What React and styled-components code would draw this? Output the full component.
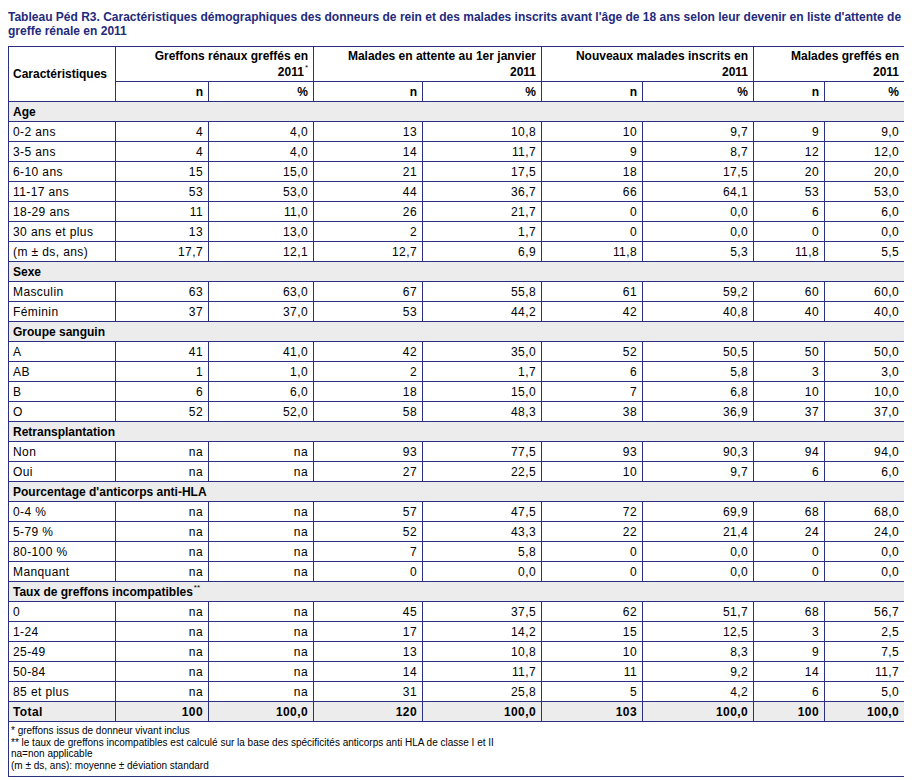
import React from "react";
import styled, { createGlobalStyle } from "styled-components";

const NAVY = "#2b2f80";

const sections = [
  {
    title: "Age",
    rows: [
      ["0-2 ans", "4", "4,0", "13", "10,8", "10", "9,7", "9", "9,0"],
      ["3-5 ans", "4", "4,0", "14", "11,7", "9", "8,7", "12", "12,0"],
      ["6-10 ans", "15", "15,0", "21", "17,5", "18", "17,5", "20", "20,0"],
      ["11-17 ans", "53", "53,0", "44", "36,7", "66", "64,1", "53", "53,0"],
      ["18-29 ans", "11", "11,0", "26", "21,7", "0", "0,0", "6", "6,0"],
      ["30 ans et plus", "13", "13,0", "2", "1,7", "0", "0,0", "0", "0,0"],
      ["(m ± ds, ans)", "17,7", "12,1", "12,7", "6,9", "11,8", "5,3", "11,8", "5,5"],
    ],
  },
  {
    title: "Sexe",
    rows: [
      ["Masculin", "63", "63,0", "67", "55,8", "61", "59,2", "60", "60,0"],
      ["Féminin", "37", "37,0", "53", "44,2", "42", "40,8", "40", "40,0"],
    ],
  },
  {
    title: "Groupe sanguin",
    rows: [
      ["A", "41", "41,0", "42", "35,0", "52", "50,5", "50", "50,0"],
      ["AB", "1", "1,0", "2", "1,7", "6", "5,8", "3", "3,0"],
      ["B", "6", "6,0", "18", "15,0", "7", "6,8", "10", "10,0"],
      ["O", "52", "52,0", "58", "48,3", "38", "36,9", "37", "37,0"],
    ],
  },
  {
    title: "Retransplantation",
    rows: [
      ["Non", "na", "na", "93", "77,5", "93", "90,3", "94", "94,0"],
      ["Oui", "na", "na", "27", "22,5", "10", "9,7", "6", "6,0"],
    ],
  },
  {
    title: "Pourcentage d'anticorps anti-HLA",
    rows: [
      ["0-4 %", "na", "na", "57", "47,5", "72", "69,9", "68", "68,0"],
      ["5-79 %", "na", "na", "52", "43,3", "22", "21,4", "24", "24,0"],
      ["80-100 %", "na", "na", "7", "5,8", "0", "0,0", "0", "0,0"],
      ["Manquant", "na", "na", "0", "0,0", "0", "0,0", "0", "0,0"],
    ],
  },
  {
    title: "Taux de greffons incompatibles",
    sup: "**",
    rows: [
      ["0", "na", "na", "45", "37,5", "62", "51,7", "68", "56,7"],
      ["1-24", "na", "na", "17", "14,2", "15", "12,5", "3", "2,5"],
      ["25-49", "na", "na", "13", "10,8", "10", "8,3", "9", "7,5"],
      ["50-84", "na", "na", "14", "11,7", "11", "9,2", "14", "11,7"],
      ["85 et plus", "na", "na", "31", "25,8", "5", "4,2", "6", "5,0"],
    ],
  },
];

const total = ["Total", "100", "100,0", "120", "100,0", "103", "100,0", "100", "100,0"];

const colWidths = [107, 93, 105, 109, 119, 101, 111, 71, 80];

const GlobalStyle = createGlobalStyle`
  body {
    margin: 8px;
    background: #ffffff;
    font-family: "Liberation Sans", Arial, sans-serif;
    color: #000000;
  }
`;

const Title = styled.div`
  font-size: 12px;
  font-weight: bold;
  line-height: 14px;
  color: #1f2a7c;
  margin: 2px 0 8px 0;
  width: 896px;
`;

const Table = styled.table`
  border-collapse: collapse;
  table-layout: fixed;
  width: 896px;
  border: 1px solid ${NAVY};
  font-size: 12px;
`;

const HeadCell = styled.th`
  border: 1px solid ${NAVY};
  font-weight: bold;
  text-align: ${(p) => p.$align || "right"};
  vertical-align: middle;
  padding: 1px 5px 1px 4px;
  line-height: 16px;
  height: 32px;
`;

const SubHeadCell = styled.th`
  border: 1px solid ${NAVY};
  font-weight: bold;
  text-align: right;
  padding: 0 5px;
  height: 19px;
  line-height: 16px;
`;

const Cell = styled.td`
  border: 1px solid ${NAVY};
  text-align: ${(p) => p.$align || "right"};
  padding: 0 5px 0 4px;
  height: 19px;
  line-height: 16px;
  letter-spacing: 0.4px;
  white-space: nowrap;
  font-weight: ${(p) => (p.$bold ? "bold" : "normal")};
`;

const SectionCell = styled.td`
  border: 1px solid ${NAVY};
  background: #ececec;
  font-weight: bold;
  padding: 0 4px;
  height: 19px;
  line-height: 16px;
`;

const TotalRow = styled.tr`
  background: #ececec;
`;

const NoteCell = styled.td`
  border: 1px solid ${NAVY};
  font-size: 10px;
  line-height: 11.5px;
  padding: 3px 2px 5px 2px;
  vertical-align: top;
`;

const Sup = styled.sup`
  font-size: 8px;
  font-weight: normal;
  vertical-align: top;
  line-height: 8px;
  margin-left: 1px;
`;

const groups = [
  ["Greffons rénaux greffés en", "2011", "*"],
  ["Malades en attente au 1er janvier", "2011"],
  ["Nouveaux malades inscrits en", "2011"],
  ["Malades greffés en", "2011"],
];

export default function App() {
  return (
    <>
      <GlobalStyle />
      <Title>
        Tableau Péd R3. Caractéristiques démographiques des donneurs de rein et des malades
        inscrits avant l'âge de 18 ans selon leur devenir en liste d'attente de greffe rénale en
        2011
      </Title>
      <Table>
        <colgroup>
          {colWidths.map((w, i) => (
            <col key={i} style={{ width: w }} />
          ))}
        </colgroup>
        <thead>
          <tr>
            <HeadCell rowSpan={2} $align="left">
              Caractéristiques
            </HeadCell>
            {groups.map((g, i) => (
              <HeadCell key={i} colSpan={2}>
                {g[0]}
                <br />
                {g[1]}
                {g[2] && <Sup>{g[2]}</Sup>}
              </HeadCell>
            ))}
          </tr>
          <tr>
            {groups.map((g, i) => (
              <React.Fragment key={i}>
                <SubHeadCell>n</SubHeadCell>
                <SubHeadCell>%</SubHeadCell>
              </React.Fragment>
            ))}
          </tr>
        </thead>
        <tbody>
          {sections.map((s) => (
            <React.Fragment key={s.title}>
              <tr>
                <SectionCell colSpan={9}>
                  {s.title}
                  {s.sup && <Sup>{s.sup}</Sup>}
                </SectionCell>
              </tr>
              {s.rows.map((r) => (
                <tr key={r[0]}>
                  {r.map((v, i) => (
                    <Cell key={i} $align={i === 0 ? "left" : "right"}>
                      {v}
                    </Cell>
                  ))}
                </tr>
              ))}
            </React.Fragment>
          ))}
          <TotalRow>
            {total.map((v, i) => (
              <Cell key={i} $bold $align={i === 0 ? "left" : "right"}>
                {v}
              </Cell>
            ))}
          </TotalRow>
          <tr>
            <NoteCell colSpan={9}>
              * greffons issus de donneur vivant inclus
              <br />
              ** le taux de greffons incompatibles est calculé sur la base des spécificités
              anticorps anti HLA de classe I et II
              <br />
              na=non applicable
              <br />
              (m ± ds, ans): moyenne ± déviation standard
            </NoteCell>
          </tr>
        </tbody>
      </Table>
    </>
  );
}
